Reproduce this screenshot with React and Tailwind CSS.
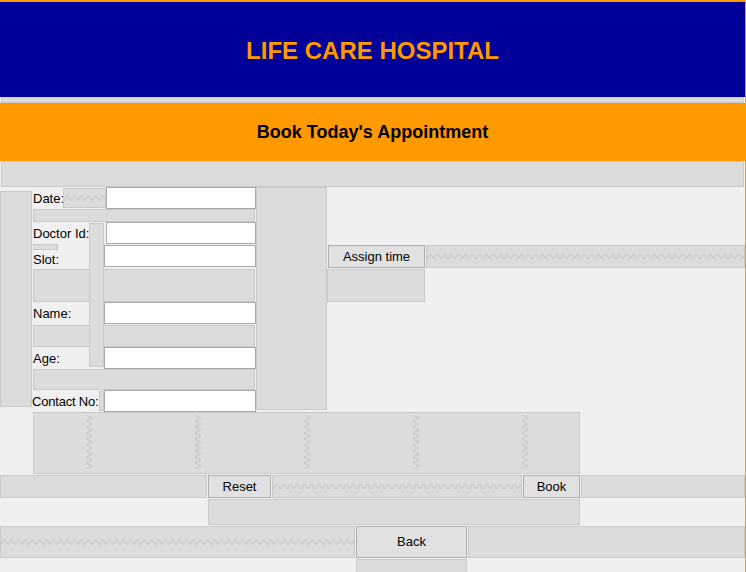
const box = "bg-[#dcdcdc] border border-[#c9c9c9] shrink-0";
const btn =
  "bg-[#e1e1e1] border border-[#adadad] flex items-center justify-center text-[13px] text-black shrink-0";
const input = "bg-white border border-[#a9a9a9] shrink-0";

// horizontal zigzag spacer (like a designer's spacer item)
const HZig = ({ className, w, h }) => {
  const mid = h / 2;
  let d = `M0 ${mid + 2.5}`;
  for (let x = 3.5, i = 0; x <= w + 4; x += 3.5, i++) {
    d += ` L${x} ${i % 2 ? mid + 2.5 : mid - 2.5}`;
  }
  return (
    <div className={`bg-[#dcdcdc] border border-[#c9c9c9] overflow-hidden min-w-0 ${className}`}>
      <svg width={w} height={h} className="block">
        <path d={d} fill="none" stroke="#c4c4c4" strokeWidth="1" />
      </svg>
    </div>
  );
};

const VZig = ({ h }) => {
  let d = `M2 0`;
  for (let y = 3, i = 0; y <= h; y += 3, i++) {
    d += ` L${i % 2 ? 2 : 8} ${y}`;
  }
  return (
    <svg width="10" height={h} className="block">
      <path d={d} fill="none" stroke="#c6c6c6" strokeWidth="1" />
    </svg>
  );
};

const Label = ({ children, className = "" }) => (
  <span className={`text-[13px] leading-[15px] text-black whitespace-nowrap ${className}`}>
    {children}
  </span>
);

export default function App() {
  return (
    <div className="w-[746px] h-[572px] overflow-hidden bg-[#f0f0f0] border-t-2 border-r border-[#ff9900] font-['Liberation_Sans',Arial,sans-serif]">
      {/* Title bar */}
      <div className="h-[95px] bg-[#000099] flex items-center justify-center pt-[3px]">
        <h1 className="text-[24px] font-bold text-[#ff9900]">LIFE CARE HOSPITAL</h1>
      </div>
      <div className={`${box} mx-px h-[6px]`} />

      {/* Banner */}
      <div className="h-[58px] bg-[#ff9900] flex items-center justify-center">
        <h2 className="text-[18px] font-bold text-black">Book Today's Appointment</h2>
      </div>
      <div className={`${box} mx-px h-[26px]`} />

      {/* Form section */}
      <div className="flex items-start h-[225px]">
        <div className={`${box} w-[32px] h-[216px] mt-[4px]`} />

        <div className="relative w-[224px] shrink-0 flex flex-col">
          <div className={`${box} absolute left-[57px] top-[36px] w-[15px] h-[144px] z-10`} />

          <div className="flex h-[22px]">
            <Label className="w-[31px] pl-px self-center">Date:</Label>
            <HZig className="w-[43px] h-[20px] mt-px shrink-0" w={41} h={18} />
            <div className={`${input} w-[150px] h-[22px]`} />
          </div>
          <div className={`${box} ml-px w-[222px] h-[13px]`} />

          <div className="flex items-center justify-between h-[22px]">
            <Label className="pl-px">Doctor Id:</Label>
            <div className={`${input} w-[150px] h-[22px]`} />
          </div>

          <div className="flex justify-between h-[25px]">
            <div className="flex flex-col">
              <div className={`${box} ml-px w-[25px] h-[6px]`} />
              <Label className="mt-[2px] pl-px">Slot:</Label>
            </div>
            <div className={`${input} w-[152px] h-[22px] mt-px`} />
          </div>
          <div className={`${box} ml-px w-[222px] h-[33px]`} />

          <div className="flex items-center justify-between h-[22px]">
            <Label className="pl-px">Name:</Label>
            <div className={`${input} w-[152px] h-[22px]`} />
          </div>
          <div className={`${box} ml-px mt-px w-[222px] h-[22px]`} />

          <div className="flex items-center justify-between h-[22px]">
            <Label className="pl-px">Age:</Label>
            <div className={`${input} w-[152px] h-[22px]`} />
          </div>
          <div className={`${box} ml-px w-[222px] h-[21px]`} />

          <div className="flex items-center h-[22px]">
            <Label className="w-[67px] text-[12.5px] tracking-[-0.2px]">Contact No:</Label>
            <div className={`${box} w-[5px] h-[20px]`} />
            <div className={`${input} w-[152px] h-[22px]`} />
          </div>
        </div>

        <div className={`${box} w-[71px] h-[223px]`} />

        <div className="flex-1 min-w-0 flex flex-col mt-[58px]">
          <div className="flex h-[23px]">
            <button className={`${btn} ml-px w-[97px] h-[23px]`}>Assign time</button>
            <HZig className="ml-px flex-1 h-[23px]" w={320} h={21} />
          </div>
          <div className={`${box} w-[98px] h-[33px] mt-px`} />
        </div>
      </div>

      {/* Vertical spacer block */}
      <div className={`${box} ml-[33px] w-[547px] h-[62px] grid grid-cols-5 place-items-center`}>
        {[0, 1, 2, 3, 4].map((i) => (
          <VZig key={i} h={56} />
        ))}
      </div>

      {/* Reset / Book row */}
      <div className="flex h-[23px] mt-px">
        <div className={`${box} w-[207px]`} />
        <button className={`${btn} ml-px w-[63px]`}>Reset</button>
        <HZig className="ml-px w-[250px] shrink-0" w={248} h={21} />
        <button className={`${btn} ml-px w-[57px]`}>Book</button>
        <div className={`${box} ml-px flex-1`} />
      </div>
      <div className={`${box} mt-px ml-[208px] w-[372px] h-[26px]`} />

      {/* Back row */}
      <div className="flex h-[32px] mt-px">
        <HZig className="w-[355px] shrink-0" w={353} h={30} />
        <button className={`${btn} ml-px w-[111px]`}>Back</button>
        <div className={`${box} ml-px flex-1`} />
      </div>
      <div className={`${box} mt-px ml-[356px] w-[111px] h-[20px]`} />
    </div>
  );
}
